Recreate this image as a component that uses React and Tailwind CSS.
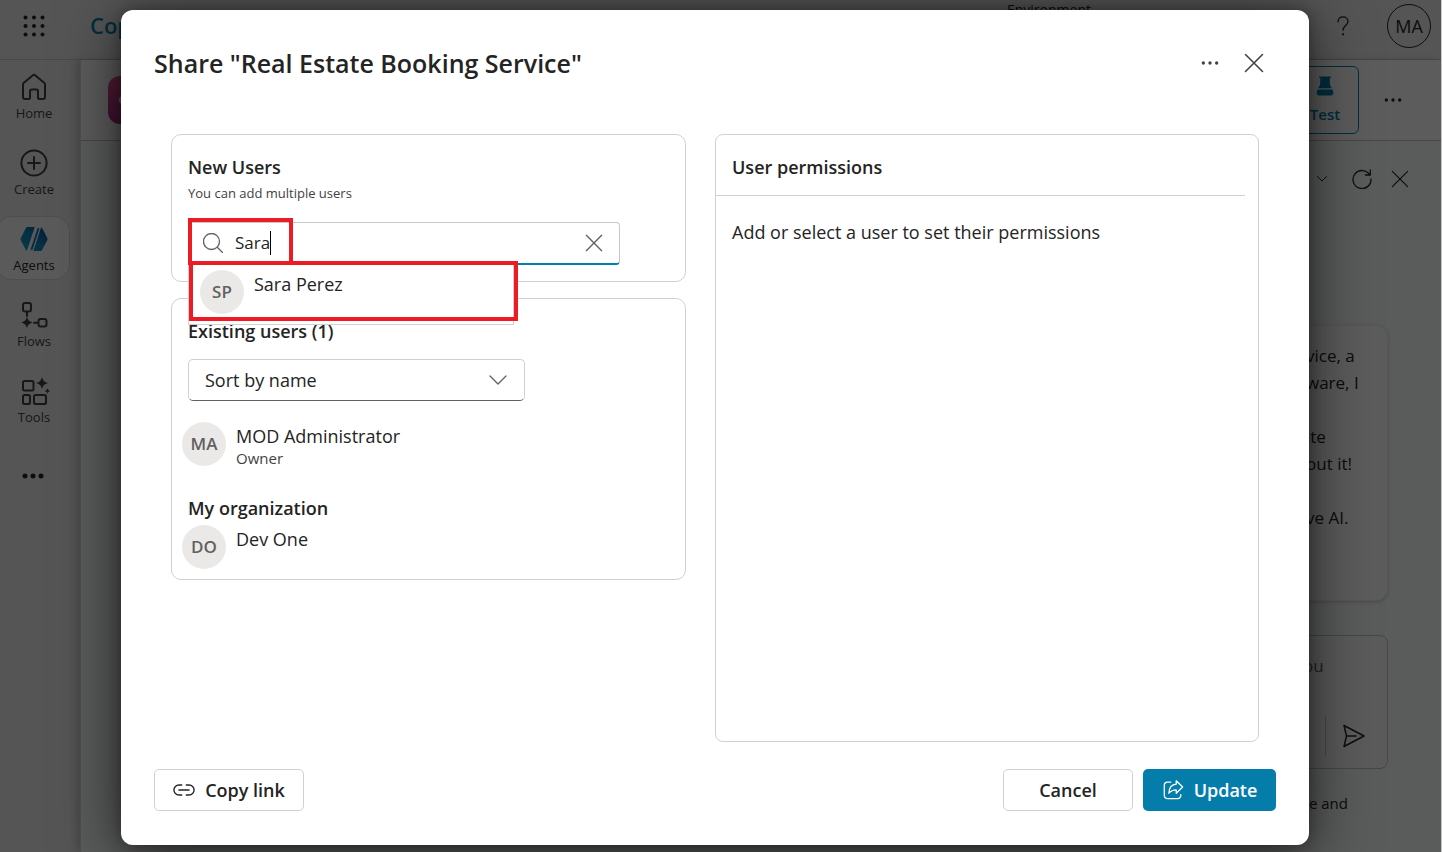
import React from "react";

function Svg({ className, children, sw = 1.5, box = 24 }) {
  return (
    <svg
      className={className}
      viewBox={`0 0 ${box} ${box}`}
      fill="none"
      stroke="currentColor"
      strokeWidth={sw}
      strokeLinecap="round"
      strokeLinejoin="round"
      aria-hidden="true"
    >
      {children}
    </svg>
  );
}

const Dots = ({ className, r = 2 }) => (
  <svg className={className} viewBox="0 0 24 24" fill="currentColor" aria-hidden="true">
    <circle cx="4" cy="12" r={r} />
    <circle cx="12" cy="12" r={r} />
    <circle cx="20" cy="12" r={r} />
  </svg>
);

const Cross = ({ className, sw = 1.5 }) => (
  <Svg className={className} sw={sw} box={20}>
    <path d="M1.5 1.5l17 17M18.5 1.5l-17 17" />
  </Svg>
);

const HomeIcon = () => (
  <Svg className="size-7" sw={2} box={28}>
    <path d="M3 11.6c0-.8.3-1.4.9-1.9l8.7-7.3c.8-.7 2-.7 2.8 0l8.7 7.3c.6.5.9 1.1.9 1.9v12.4a2 2 0 0 1-2 2h-3.500a1.500 1.500 0 0 1-1.500-1.500V18a1.500 1.500 0 0 0-1.500-1.500h-5A1.500 1.500 0 0 0 10 18v6.500A1.500 1.500 0 0 1 8.500 26H5a2 2 0 0 1-2-2z" />
  </Svg>
);

const CreateIcon = () => (
  <Svg className="size-7" sw={2} box={28}>
    <circle cx="14" cy="14" r="12.600" />
    <path d="M14 8v12M8 14h12" />
  </Svg>
);

const AgentsIcon = () => (
  <svg className="size-7" viewBox="0 0 28 28" aria-hidden="true">
    <defs>
      <linearGradient id="agentsFill" x1="0" y1="1" x2="1" y2="0">
        <stop offset="0" stopColor="#16a6c2" />
        <stop offset="0.5" stopColor="#1183bb" />
        <stop offset="1" stopColor="#0a4d92" />
      </linearGradient>
    </defs>
    <path
      fill="url(#agentsFill)"
      d="M7.500 2h7.200L7.400 24.300C7 25.400 6.600 26 6 25.300L.9 15.600c-.5-.9-.5-2 0-2.900L5.800 3.200C6.200 2.400 6.700 2 7.500 2zM20.500 26h-7.200L20.600 3.700c.4-1.100.9-1.500 1.500-.7l5 9.700c.5.9.5 2 0 2.900l-4.900 9.200c-.4.8-.9 1.200-1.700 1.200z"
    />
    <path d="M17.200 2.800L9.800 25.200h1.900c.9 0 1.300-.5 1.600-1.300l6.400-19.500c.3-.9-.1-1.600-1-1.600z" fill="#1277b4" stroke="#f5fbff" strokeWidth="1" />
  </svg>
);

const FlowsIcon = () => (
  <Svg className="size-7" sw={2} box={28}>
    <rect x="3" y="2" width="8" height="8.500" rx="2" />
    <rect x="18.500" y="18" width="8" height="7.500" rx="2" />
    <path d="M7 11v4M14 21.700h4" />
    <path
      d="M7 15.500c.9 3.600 2 4.800 5.600 5.900C9 22.600 7.900 23.700 7 27.200c-.9-3.500-2-4.600-5.600-5.800C5 20.300 6.100 19.100 7 15.500z"
      fill="currentColor"
      stroke="none"
    />
  </Svg>
);

const ToolsIcon = () => (
  <Svg className="size-7 overflow-visible" sw={2} box={28}>
    <rect x="3" y="4" width="10.500" height="9.500" rx="1.500" />
    <rect x="3" y="18" width="7" height="9" rx="1.500" />
    <rect x="14" y="18" width="12" height="9" rx="1.500" />
    <path
      d="M22 0c1 3.700 2.200 5 6 6-3.800 1.100-5 2.300-6 6-1-3.700-2.200-4.900-6-6 3.800-1 5-2.300 6-6zM27.500 11c.4 1.800 1 2.400 2.800 3-1.800.6-2.400 1.200-2.800 3-.4-1.800-1-2.400-2.800-3 1.800-.6 2.400-1.200 2.800-3z"
      fill="currentColor"
      stroke="none"
    />
  </Svg>
);

const RefreshIcon = () => (
  <Svg className="size-5" sw={1.300} box={20}>
    <path d="M17.800 6A9 9 0 1 0 19 10M18.300 1v5h-5" />
  </Svg>
);

const SendIcon = () => (
  <Svg className="size-6" sw={1.500} box={24}>
    <path d="M2 1.500L22 12 2 22.500 4.500 12zM4.500 12H14" />
  </Svg>
);

const navItems = [
  { label: "Home", icon: <HomeIcon /> },
  { label: "Create", icon: <CreateIcon /> },
  { label: "Agents", icon: <AgentsIcon />, active: true },
  { label: "Flows", icon: <FlowsIcon /> },
  { label: "Tools", icon: <ToolsIcon /> },
];

const messageLines = ["vice, a", "ware, I", "", "ite", "out it!", "", "ve AI."];

function Background() {
  return (
    <div className="mr-px flex min-h-screen flex-col bg-[#ececec] text-[#242424]">
      <header className="flex h-15 items-center border-b border-[#c8c8c8] pr-2.5 pb-2 pl-5">
        <button aria-label="App launcher" className="flex size-7 items-center justify-center">
          <svg className="size-6" viewBox="0 0 24 24" fill="currentColor" aria-hidden="true">
            {[3.500, 12, 20.500].map((y) => [3.500, 12, 20.500].map((x) => <circle key={`${x}-${y}`} cx={x} cy={y} r="2" />))}
          </svg>
        </button>
        <span className="ml-[42px] text-[22px] font-semibold text-[#037fab]">Copilot</span>
        <span className="mr-[240px] ml-auto self-start text-sm leading-5">Environment</span>
        <button aria-label="Help" className="mr-8 flex h-8 w-6 items-center justify-center">
          <Svg className="h-6 w-5" sw={1.500}>
            <path d="M6 7c0-3.800 2.500-6 6-6s6 2.300 6 5.500c0 4.500-6 5.500-6 10.500" />
            <circle cx="12" cy="22" r=".6" fill="currentColor" />
          </Svg>
        </button>
        <button className="flex size-11 shrink-0 items-center justify-center rounded-full border border-[#242424] text-lg">MA</button>
      </header>
      <div className="flex flex-1">
        <nav aria-label="Main" className="flex w-20 shrink-0 flex-col gap-3 pt-1 pr-2.5">
          {navItems.map((item) => (
            <a
              key={item.label}
              href="#"
              className={
                item.active
                  ? "-ml-1 flex h-16 flex-col items-center gap-0.5 rounded-2xl border border-[#d8d8d8] bg-[#fafafa] pt-2 pl-0.5 text-[13px] leading-5"
                  : "-ml-1 flex h-16 flex-col items-center gap-0.5 border border-transparent pt-2 pl-0.5 text-[13px] leading-5 text-[#424242]"
              }
            >
              {item.icon}
              <span>{item.label}</span>
            </a>
          ))}
          <button aria-label="More" className="-ml-1 flex h-16 items-center justify-center">
            <Dots className="size-6" r={2.500} />
          </button>
        </nav>
        <div className="flex min-w-0 flex-1 flex-col border-l border-[#dcdcdc] bg-white shadow-[-4px_0_8px_rgba(0,0,0,0.15)]">
          <div className="flex h-[81px] items-center border-b border-[#c4c4c4] pr-[38px] pl-[27px]">
            <div className="flex size-12 items-center justify-center rounded-xl bg-linear-to-b from-[#e8508c] to-[#b0308f] text-white">
              <Svg className="size-8" sw={2}>
                <path d="M8 4h8l5 8-5 8H8l-5-8z" />
              </Svg>
            </div>
            <button className="ml-auto flex h-17 w-17 flex-col items-center gap-1 rounded-md border border-[#037fab] pt-2 text-[15px] font-semibold text-[#037fab]">
              <svg className="size-6" viewBox="0 0 24 24" fill="currentColor" aria-hidden="true">
                <path d="M6 1.500h12v1.300h-1.200V8c0 2 .7 3.200 2 5.200H5.200c1.300-2 2-3.200 2-5.200V2.800H6zM4.600 14.400h14.800l.8 2.400c.6 2-.4 3.700-2.200 3.700H6c-1.800 0-2.800-1.700-2.200-3.700z" />
              </svg>
              Test
            </button>
            <button aria-label="More actions" className="ml-6 flex size-5 items-center justify-center">
              <Dots className="size-5" r={2} />
            </button>
          </div>
          <div className="flex flex-1 flex-col items-end bg-[#fafdfd] pr-[53px]">
            <div className="-mr-5 flex h-19 items-center gap-5 text-[#242424]">
              <button aria-label="Options">
                <Svg className="mr-1 size-3" sw={2}>
                  <path d="M3 7l9 9 9-9" />
                </Svg>
              </button>
              <button aria-label="Restart"><RefreshIcon /></button>
              <button aria-label="Close panel" className="flex w-4 justify-center"><Cross className="size-[18px] shrink-0" sw={1.300} /></button>
            </div>
            <div className="mt-27 h-[276px] w-[360px] rounded-xl border border-[#f0f0f0] bg-white pt-4 pl-[277px] text-[17px] leading-[27px] shadow-[0_1px_4px_rgba(0,0,0,0.2)]">
              {messageLines.map((line, i) => (
                <p key={i} className="h-[27px] whitespace-nowrap">{line}</p>
              ))}
            </div>
            <div className="mt-[34px] flex h-[134px] w-[360px] flex-col rounded-lg border border-[#c4c4c4] bg-[#fcfcfc]">
              <span className="pt-[18px] pl-[274px] text-[17px] leading-6 text-[#616161]">ou</span>
              <div className="mt-auto mr-[21px] mb-3 flex items-center justify-end gap-4">
                <span className="h-10 w-px bg-[#c4c4c4]" />
                <button aria-label="Send"><SendIcon /></button>
              </div>
            </div>
            <span className="mt-6 mr-10 text-[15px] leading-5">e and</span>
          </div>
        </div>
      </div>
    </div>
  );
}

function Person({ initials, name, role }) {
  return (
    <div className="flex gap-2.5">
      <span className="flex size-11 shrink-0 items-center justify-center rounded-full bg-[#ebe9e8] text-[17px] font-semibold text-[#616161]">
        {initials}
      </span>
      <div className="pt-0.5">
        <p className="text-lg leading-6">{name}</p>
        {role && <p className="text-[15px] leading-5 text-[#424242]">{role}</p>}
      </div>
    </div>
  );
}

function NewUsers() {
  return (
    <section className="rounded-[10px] border border-[#d1d1d1] px-4 pt-5 pb-4">
      <h2 className="text-lg leading-6 font-semibold">New Users</h2>
      <p className="mt-1 text-[13px] leading-5 text-[#424242]">You can add multiple users</p>
      <div className="relative mt-[19px] mr-[49px]">
        <div className="flex h-[43px] items-center rounded border border-b-2 border-[#c7c7c7] border-b-[#037fab] pr-4 pl-3.5">
          <Svg className="mr-3 size-5 text-[#616161]" sw={1.300} box={20}>
            <circle cx="8.500" cy="8.500" r="8" />
            <path d="M14.300 14.300l5.200 5.200" />
          </Svg>
          <input
            aria-label="Search users"
            defaultValue="Sara"
            className="field-sizing-content text-[17px] leading-6 outline-none"
          />
          <span className="h-6 w-px bg-black" />
          <button aria-label="Clear search" className="ml-auto text-[#616161]">
            <Cross className="size-[18px]" sw={1.500} />
          </button>
        </div>
        <ul className="absolute top-[42px] left-0 z-10 h-[61px] w-[326px] border border-[#d1d1d1] bg-white pt-[5px] pl-[11px]">
          <li>
            <Person initials="SP" name="Sara Perez" />
          </li>
        </ul>
        <div className="pointer-events-none absolute -top-1 left-0 z-20 h-[47px] w-[105px] border-4 border-[#ed1c24]" />
        <div className="pointer-events-none absolute top-[39px] left-px z-20 h-15 w-[329px] border-4 border-[#ed1c24]" />
      </div>
    </section>
  );
}

function ExistingUsers() {
  return (
    <section className="mt-4 rounded-[10px] border border-[#d1d1d1] px-4 pt-5 pb-2.5">
      <h2 className="text-lg leading-6 font-semibold">Existing users (1)</h2>
      <div className="relative mt-4 w-[337px]">
        <select
          aria-label="Sort users"
          className="block h-[42px] w-full appearance-none rounded-[5px] border border-[#d1d1d1] border-b-[#616161] bg-white px-4 text-lg text-[#242424]"
        >
          <option>Sort by name</option>
        </select>
        <Svg className="pointer-events-none absolute top-3 right-[18px] size-[18px] text-[#616161]" sw={1.300} box={18}>
          <path d="M1 5l8 8 8-8" />
        </Svg>
      </div>
      <div className="mt-[21px] -ml-1.5">
        <Person initials="MA" name="MOD Administrator" role="Owner" />
      </div>
      <h3 className="mt-7 mb-[5px] text-lg leading-6 font-semibold">My organization</h3>
      <div className="-ml-1.5">
        <Person initials="DO" name="Dev One" />
      </div>
    </section>
  );
}

export default function App() {
  return (
    <div className="relative h-screen overflow-hidden bg-[#c8c8c8] font-['Open_Sans','Noto_Sans',sans-serif]">
      <Background />
      <div className="absolute inset-0 mr-px flex bg-black/64 pt-2.5 pr-[132px] pb-[7px] pl-[121px]">
        <div
          role="dialog"
          aria-modal="true"
          aria-labelledby="share-title"
          className="flex flex-1 flex-col rounded-xl bg-white px-[33px] pb-[34px] text-[#242424] shadow-[0_12px_64px_rgba(0,0,0,0.6),0_0_16px_rgba(0,0,0,0.35)]"
        >
          <div className="flex items-center pt-[37px] pr-3">
            <h1 id="share-title" className="flex-1 text-[25px] leading-8 font-semibold">Share "Real Estate Booking Service"</h1>
            <button aria-label="More options" className="mr-6 text-[#424242]">
              <Dots className="size-5" r={2} />
            </button>
            <button aria-label="Close dialog" className="text-[#424242]">
              <Cross className="size-5" sw={1.600} />
            </button>
          </div>
          <div className="mt-[55px] grid flex-1 grid-cols-[515fr_544fr] gap-[29px] px-[17px]">
            <div>
              <NewUsers />
              <ExistingUsers />
            </div>
            <section className="rounded-lg border border-[#d1d1d1]">
              <h2 className="mr-[13px] border-b border-[#d1d1d1] px-4 pt-5 pb-4 text-lg leading-6 font-semibold">User permissions</h2>
              <p className="px-4 pt-6 text-lg leading-6">Add or select a user to set their permissions</p>
            </section>
          </div>
          <div className="mt-[27px] flex gap-2.5 text-lg font-semibold">
            <button className="mr-auto flex h-[42px] w-[150px] items-center justify-center gap-2.5 rounded-[5px] border border-[#d1d1d1]">
              <Svg className="h-6 w-[22px]" sw={1.500}>
                <path d="M9.500 6.500H6.500a5.500 5.500 0 0 0 0 11h3M14.500 6.500h3a5.500 5.500 0 0 1 0 11h-3M6.500 12h11" />
              </Svg>
              Copy link
            </button>
            <button className="h-[42px] w-[130px] rounded-[5px] border border-[#d1d1d1]">Cancel</button>
            <button className="flex h-[42px] w-[133px] items-center justify-center gap-2.5 rounded-[5px] bg-[#057dab] text-white">
              <Svg className="size-[22px]" sw={1.400}>
                <path d="M9.500 3.500H6a3.500 3.500 0 0 0-3.500 3.500v11A3.500 3.500 0 0 0 6 21.500h11a3.500 3.500 0 0 0 3.500-3.500v-1" />
                <path d="M15.500 2l7 6.800-7 6.700v-3.700c-3.500 0-5.700 1-8 3.700.3-5.500 3-9.500 8-9.800z" />
              </Svg>
              Update
            </button>
          </div>
        </div>
      </div>
    </div>
  );
}
